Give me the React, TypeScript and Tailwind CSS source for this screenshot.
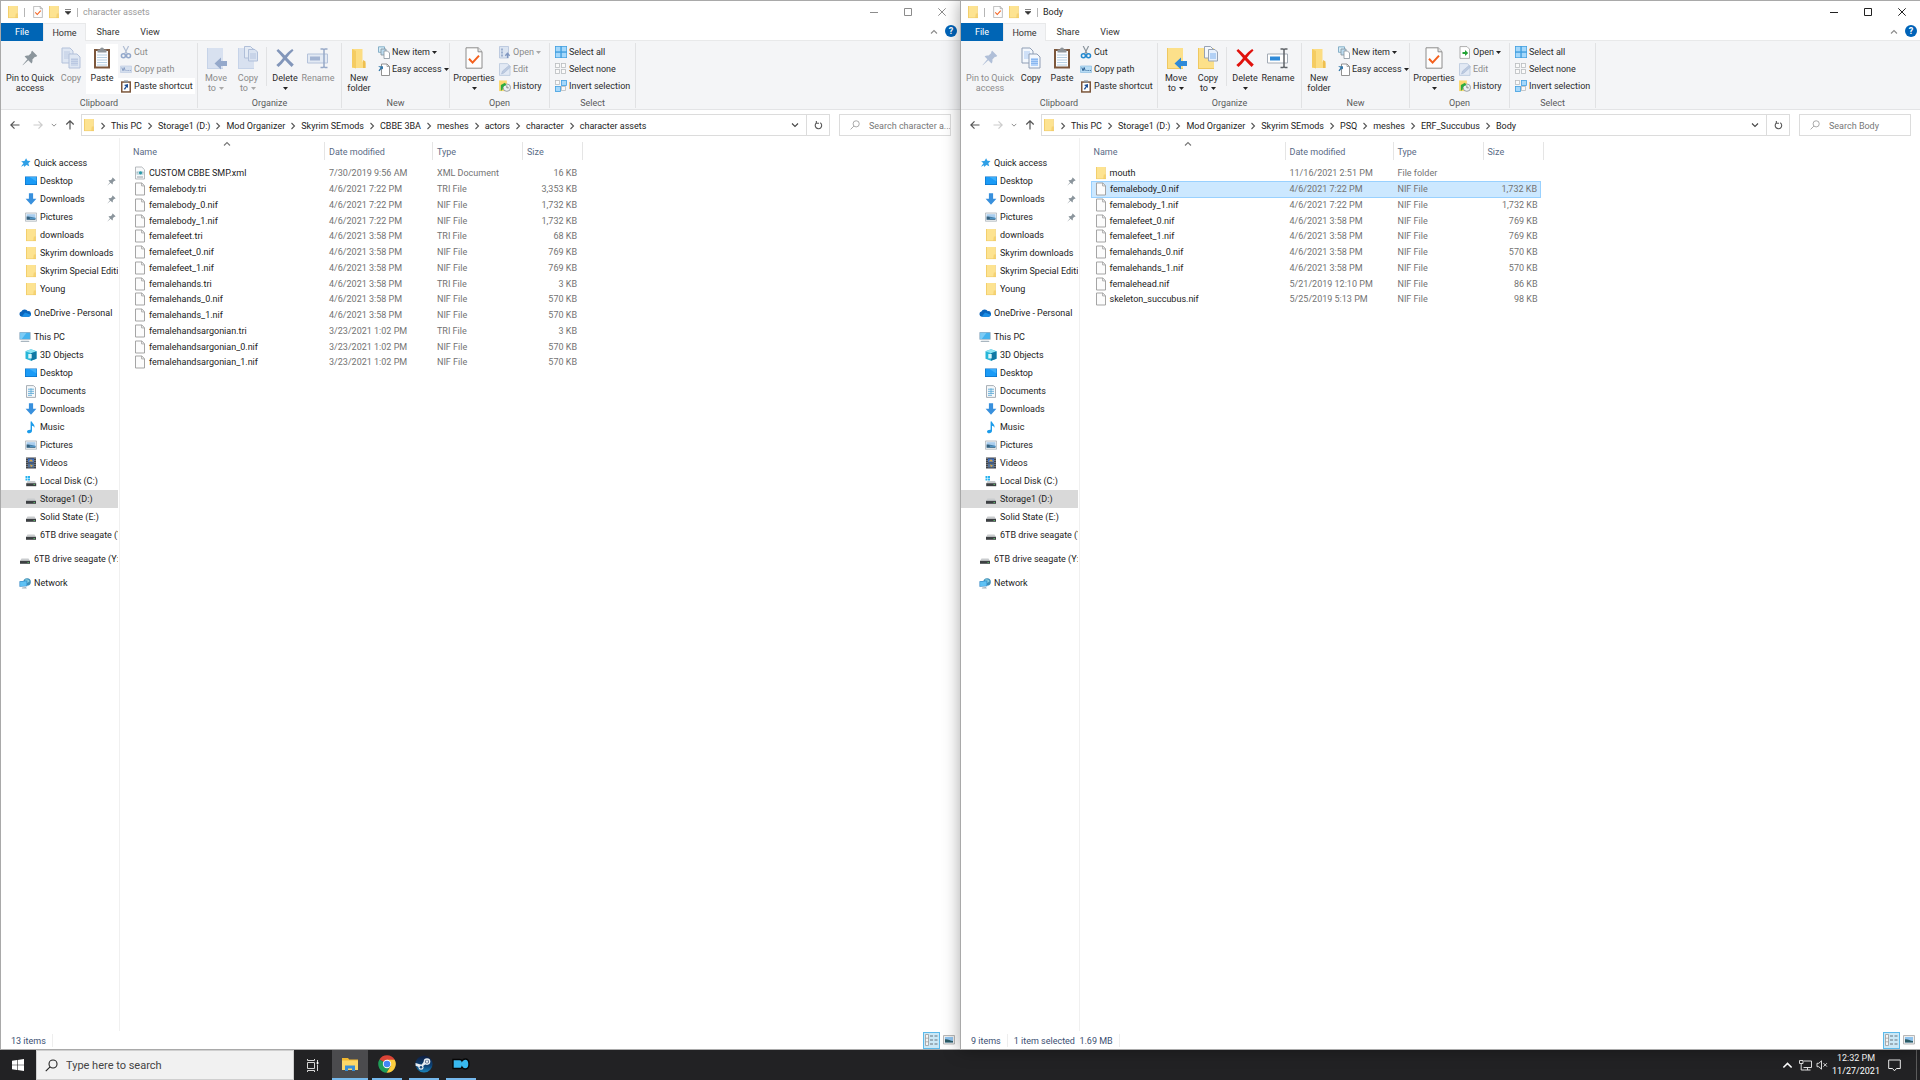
import type { ReactNode } from "react";
import clsx from "clsx";

type FileRow = { name: string; date: string; type: string; size: string; icon?: "folder" | "xml"; selected?: boolean };

type WindowData = {
  id: string;
  title: string;
  path: string[];
  files: FileRow[];
  status: string[];
  active: boolean;
};

const LEFT_WINDOW: WindowData = {
  id: "left",
  title: "character assets",
  active: false,
  path: ["This PC", "Storage1 (D:)", "Mod Organizer", "Skyrim SEmods", "CBBE 3BA", "meshes", "actors", "character", "character assets"],
  status: ["13 items"],
  files: [
    { name: "CUSTOM CBBE SMP.xml", date: "7/30/2019 9:56 AM", type: "XML Document", size: "16 KB", icon: "xml" },
    { name: "femalebody.tri", date: "4/6/2021 7:22 PM", type: "TRI File", size: "3,353 KB" },
    { name: "femalebody_0.nif", date: "4/6/2021 7:22 PM", type: "NIF File", size: "1,732 KB" },
    { name: "femalebody_1.nif", date: "4/6/2021 7:22 PM", type: "NIF File", size: "1,732 KB" },
    { name: "femalefeet.tri", date: "4/6/2021 3:58 PM", type: "TRI File", size: "68 KB" },
    { name: "femalefeet_0.nif", date: "4/6/2021 3:58 PM", type: "NIF File", size: "769 KB" },
    { name: "femalefeet_1.nif", date: "4/6/2021 3:58 PM", type: "NIF File", size: "769 KB" },
    { name: "femalehands.tri", date: "4/6/2021 3:58 PM", type: "TRI File", size: "3 KB" },
    { name: "femalehands_0.nif", date: "4/6/2021 3:58 PM", type: "NIF File", size: "570 KB" },
    { name: "femalehands_1.nif", date: "4/6/2021 3:58 PM", type: "NIF File", size: "570 KB" },
    { name: "femalehandsargonian.tri", date: "3/23/2021 1:02 PM", type: "TRI File", size: "3 KB" },
    { name: "femalehandsargonian_0.nif", date: "3/23/2021 1:02 PM", type: "NIF File", size: "570 KB" },
    { name: "femalehandsargonian_1.nif", date: "3/23/2021 1:02 PM", type: "NIF File", size: "570 KB" },
  ],
};

const RIGHT_WINDOW: WindowData = {
  id: "right",
  title: "Body",
  active: true,
  path: ["This PC", "Storage1 (D:)", "Mod Organizer", "Skyrim SEmods", "PSQ", "meshes", "ERF_Succubus", "Body"],
  status: ["9 items", "1 item selected  1.69 MB"],
  files: [
    { name: "mouth", date: "11/16/2021 2:51 PM", type: "File folder", size: "", icon: "folder" },
    { name: "femalebody_0.nif", date: "4/6/2021 7:22 PM", type: "NIF File", size: "1,732 KB", selected: true },
    { name: "femalebody_1.nif", date: "4/6/2021 7:22 PM", type: "NIF File", size: "1,732 KB" },
    { name: "femalefeet_0.nif", date: "4/6/2021 3:58 PM", type: "NIF File", size: "769 KB" },
    { name: "femalefeet_1.nif", date: "4/6/2021 3:58 PM", type: "NIF File", size: "769 KB" },
    { name: "femalehands_0.nif", date: "4/6/2021 3:58 PM", type: "NIF File", size: "570 KB" },
    { name: "femalehands_1.nif", date: "4/6/2021 3:58 PM", type: "NIF File", size: "570 KB" },
    { name: "femalehead.nif", date: "5/21/2019 12:10 PM", type: "NIF File", size: "86 KB" },
    { name: "skeleton_succubus.nif", date: "5/25/2019 5:13 PM", type: "NIF File", size: "98 KB" },
  ],
};

/* ---------- small icons ---------- */

function Folder({ className = "w-3 h-[14px]" }: { className?: string }) {
  return (
    <svg viewBox="0 0 12 14" className={clsx("shrink-0", className)}>
      <path d="M1 1h9.5v12H1z" fill="#fde391" />
      <path d="M1 1h1v12H1z" fill="#f3cf6c" />
      <path d="M8.8 8.5H11V13H8.2z" fill="#f5d273" />
      <path d="M10 1h.6v8H10z" fill="#f0cf75" />
      <path d="M1 12.5h10v.6H1z" fill="#eecb68" />
    </svg>
  );
}

function Page() {
  return (
    <svg viewBox="0 0 12 14" className="w-3 h-[14px] shrink-0">
      <path d="M1.5 1h6.3l2.7 2.7V13h-9z" fill="#fcfcfc" stroke="#9b9b9b" strokeWidth=".9" />
      <path d="M7.6 1v2.9h2.9" fill="none" stroke="#9b9b9b" strokeWidth=".8" />
    </svg>
  );
}

function XmlPage() {
  return (
    <svg viewBox="0 0 12 14" className="w-3 h-[14px] shrink-0">
      <path d="M1.5 1h6.3l2.7 2.7V13h-9z" fill="#f8f9fa" stroke="#a5a9ad" strokeWidth=".8" />
      <path d="M2.5 5h7v4h-7z" fill="#c9dfe6" />
      <circle cx="6.500" cy="6.800" r="1.600" fill="#2a9aa8" />
      <path d="M3.200 6.300v1M9 6.300v1M3 11h6" stroke="#7c8b93" strokeWidth=".8" />
    </svg>
  );
}

function CheckDoc({ className = "w-3 h-[14px]" }: { className?: string }) {
  return (
    <svg viewBox="0 0 18 22" className={className}>
      <path d="M1 .8h12.2L17 4.6v16.6H1z" fill="#fdfdfd" stroke="#8c8c8c" />
      <path d="M13 .8v4h4" fill="#e8e8e8" stroke="#8c8c8c" />
      <path d="M4 11.8l3.6 3.8L14 8.6" fill="none" stroke="#f4601d" strokeWidth="2" />
    </svg>
  );
}

function Pin({ className, color }: { className: string; color: string }) {
  return (
    <svg viewBox="0 0 16 16" className={className}>
      <path d="M10.2.8l5 5-1.2 1.1-1-.2-2.6 2.7c.3 1.6 0 3-.9 4L6.3 10.3.8 15.2l-.2-.3 4.8-5.6L2.6 6.4c1-.9 2.500-1.200 4-.8l2.700-2.700-.2-1z" fill={color} />
    </svg>
  );
}

function Caret({ className = "text-[#222]" }: { className?: string }) {
  return (
    <svg viewBox="0 0 5 3" className={clsx("w-[5px] h-[3px] inline-block shrink-0", className)}>
      <path d="M0 0h5L2.500 3z" fill="currentColor" />
    </svg>
  );
}

function Chevron({ dir, className }: { dir: "right" | "down" | "up"; className: string }) {
  const d = { right: "M2.500 1l3 3-3 3", down: "M1 2.500l3 3 3-3", up: "M1 5.500l3-3 3 3" }[dir];
  return (
    <svg viewBox="0 0 8 8" className={clsx("shrink-0", className)}>
      <path d={d} fill="none" stroke="currentColor" strokeWidth="1.1" />
    </svg>
  );
}

function Arrow({ rotate, className }: { rotate?: boolean; className: string }) {
  return (
    <svg viewBox="0 0 10 10" className={clsx("w-[10px] h-[10px] shrink-0", rotate && "rotate-180", className)}>
      <path d="M9.500 5H1M4.500 1.300L.8 5l3.700 3.700" fill="none" stroke="currentColor" strokeWidth="1.2" />
    </svg>
  );
}

function Magnifier({ className }: { className: string }) {
  return (
    <svg viewBox="0 0 12 12" className={clsx("shrink-0", className)}>
      <circle cx="7.400" cy="4.600" r="3.700" fill="none" stroke="currentColor" />
      <path d="M4.700 7.300L.7 11.300" stroke="currentColor" />
    </svg>
  );
}

/* ---------- sidebar icons ---------- */

const SIDE_ICONS: Record<string, ReactNode> = {
  star: (
    <svg viewBox="0 0 14 14" className="w-3 h-3">
      <path d="M8.300 1.500l1.500 3 3.600.2-2.500 2.500 1.100 3.500-3.300-1.300-2.900 2.400.1-2.200-3.600 1.700 2.900-4L2.500 4.900l3.900-.2z" fill="#2e9fe6" />
    </svg>
  ),
  folder: <Folder />,
  desktop: (
    <svg viewBox="0 0 12 12" className="w-3 h-3">
      <path d="M0 1.500h12v8.500H0z" fill="#0a6fc4" />
      <path d="M.6 2h10.800v7.300H.6z" fill="#1b9bf6" />
      <path d="M4.500 2h6.900v4.500z" fill="#3aaefb" />
    </svg>
  ),
  down: (
    <svg viewBox="0 0 12 12" className="w-3 h-3">
      <path d="M3.900.3h4.200v5.500h3.300L6 11.700.6 5.800h3.300z" fill="#3890dd" />
    </svg>
  ),
  pictures: (
    <svg viewBox="0 0 12 12" className="w-3 h-3">
      <path d="M.4 2h11.200v8.200H.4z" fill="#f4f6f8" stroke="#a9b1b8" strokeWidth=".8" />
      <path d="M1.600 3.200h8.800v5.600H1.600z" fill="#a8cdee" />
      <path d="M1.600 5.600c3-.6 5 .8 8.800 1.400v1.800H1.600z" fill="#35607c" />
      <path d="M4.500 6.600l6 .2v1H5z" fill="#5aa4dc" />
    </svg>
  ),
  cloud: (
    <svg viewBox="0 0 13 12" className="w-[13px] h-3">
      <path d="M3 10a2.800 2.800 0 0 1-.4-5.500A4 4 0 0 1 9.600 4a3 3 0 0 1 .8 6z" fill="#0a64bb" />
      <path d="M3 10l3.500-4.500L12.800 8c0 1.200-1 2-2.200 2z" fill="#1a8ee6" />
    </svg>
  ),
  pc: (
    <svg viewBox="0 0 13 12" className="w-[13px] h-3">
      <path d="M.5.800h12v8H.5z" fill="#7e9fb8" />
      <path d="M1.200 1.500h10.600v6.600H1.200z" fill="#45b3ee" />
      <path d="M1.200 1.500h7L3 8.100H1.200z" fill="#7bcbf6" />
      <path d="M2.500 10h8l1 1.300h-10z" fill="#a9b6c0" />
    </svg>
  ),
  cube: (
    <svg viewBox="0 0 12 12" className="w-3 h-3">
      <path d="M.5 2.200L6 .3l5.500 1.900v7.600L6 11.700.5 9.800z" fill="#27b6d8" />
      <path d="M.5 2.200L6 .3l5.500 1.900L6 4.200z" fill="#8de3f2" />
      <path d="M6 4.200l5.500-2v7.600L6 11.700z" fill="#1077a3" />
      <path d="M3.300 5h3.400v4.400H3.300z" fill="#d9f6fb" />
    </svg>
  ),
  doc: (
    <svg viewBox="0 0 12 13" className="w-3 h-[13px]">
      <path d="M1.500.6h7l2 2v9.800h-9z" fill="#f6f8fa" stroke="#939ca4" strokeWidth=".8" />
      <path d="M3 4.200h6M3 6.300h6M3 8.400h6M3 10.300h4M6 3.300v5.800" stroke="#5ba9d6" strokeWidth=".9" />
    </svg>
  ),
  music: (
    <svg viewBox="0 0 12 13" className="w-3 h-[13px]">
      <path d="M5.600.5h1.300c.3 2 3.100 2.600 2.600 6.300-.6-1.300-1.300-1.800-2.500-2v5c0 1.500-1.200 2.500-2.700 2.500S2 11.500 2 10.500s1.200-1.900 3.600-1.800z" fill="#1b9bea" />
    </svg>
  ),
  video: (
    <svg viewBox="0 0 12 12" className="w-3 h-3">
      <path d="M1 .5h10v11H1z" fill="#404348" />
      <path d="M3 1.500h6v4H3z" fill="#3d6ec1" />
      <path d="M3 6.500h6v4H3z" fill="#54749c" />
      <path d="M3.500 4.500L6 2.300l2.500 2.200zM5 7.500l3 1-2 1.700z" fill="#d6a646" />
      <path d="M2 1v10M10 1v10" stroke="#c7c9cc" strokeWidth=".8" strokeDasharray="1 1" />
    </svg>
  ),
  osdisk: (
    <svg viewBox="0 0 12 12" className="w-3 h-3">
      <path d="M.5 1h2v2h-2zM3 1h2v2H3zM.5 3.500h2v2h-2zM3 3.500h2v2H3z" fill="#27b2ef" />
      <path d="M2.500 6h7.500l1.200 2.300H1.400z" fill="#c9ccce" />
      <path d="M1.200 8.200h10v3h-10z" fill="#3d4043" />
      <path d="M8.500 9.300h1.500v.8H8.500z" fill="#5fd36d" />
    </svg>
  ),
  disk: (
    <svg viewBox="0 0 12 12" className="w-3 h-3">
      <path d="M2.500 5.500h7l1.300 2.300H1.200z" fill="#c9ccce" />
      <path d="M1 7.800h10v3H1z" fill="#3d4043" />
      <path d="M8.500 8.900h1.500v.8H8.500z" fill="#5fd36d" />
    </svg>
  ),
  network: (
    <svg viewBox="0 0 13 13" className="w-[13px] h-[13px]">
      <circle cx="8.800" cy="4.800" r="4" fill="#3f8fb8" />
      <path d="M6 2.500c2-1.500 5-.5 5.500 1.500L9 6z" fill="#86cfe0" />
      <path d="M.5 4l8.500-.8v6.400L.5 10z" fill="#2f86c6" />
      <path d="M1.200 4.700l7-.7v5l-7 .4z" fill="#5fc2f4" />
      <path d="M3.500 10.800l4-.4 1 1.400H3z" fill="#9fb1bd" />
    </svg>
  ),
};

const SIDEBAR: { icon: string; label: string; pinned?: boolean; selected?: boolean }[][] = [
  [
    { icon: "star", label: "Quick access" },
    { icon: "desktop", label: "Desktop", pinned: true },
    { icon: "down", label: "Downloads", pinned: true },
    { icon: "pictures", label: "Pictures", pinned: true },
    { icon: "folder", label: "downloads" },
    { icon: "folder", label: "Skyrim downloads" },
    { icon: "folder", label: "Skyrim Special Editi" },
    { icon: "folder", label: "Young" },
  ],
  [{ icon: "cloud", label: "OneDrive - Personal" }],
  [
    { icon: "pc", label: "This PC" },
    { icon: "cube", label: "3D Objects" },
    { icon: "desktop", label: "Desktop" },
    { icon: "doc", label: "Documents" },
    { icon: "down", label: "Downloads" },
    { icon: "music", label: "Music" },
    { icon: "pictures", label: "Pictures" },
    { icon: "video", label: "Videos" },
    { icon: "osdisk", label: "Local Disk (C:)" },
    { icon: "disk", label: "Storage1 (D:)", selected: true },
    { icon: "disk", label: "Solid State (E:)" },
    { icon: "disk", label: "6TB drive seagate (Y:)" },
  ],
  [{ icon: "disk", label: "6TB drive seagate (Y:)" }],
  [{ icon: "network", label: "Network" }],
];

/* ---------- ribbon icons ---------- */

function CopyIcon({ off }: { off?: boolean }) {
  const line = off ? "#b3c1da" : "#8f9eb5";
  const fill = off ? "#dfe7f3" : "#f4f8fd";
  return (
    <svg viewBox="0 0 20 22" className="w-5 h-[22px]">
      <path d="M1 1h8l3 3v12H1z" fill={fill} stroke={line} />
      <path d="M3 5h6M3 7h7M3 9h7M3 11h7" stroke={off ? "#bccae2" : "#a9c8f2"} />
      <path d="M8 7h8l3 3v11H8z" fill={fill} stroke={line} />
      <path d="M10 11h7v8h-7z" fill={off ? "#cbd7ea" : "#b4d3fa"} />
      <path d="M10 12.500h7M10 14.500h7M10 16.500h7" stroke={off ? "#b5c4df" : "#7db0ee"} strokeWidth=".8" />
    </svg>
  );
}

function PasteIcon() {
  return (
    <svg viewBox="0 0 18 22" className="w-[18px] h-[22px]">
      <path d="M1 2h16v19.500H1z" fill="#7c573c" />
      <path d="M3 4h12v15.500H3z" fill="#fbfdff" />
      <path d="M4 8h10M4 10.500h10M4 13h10M4 15.500h10M4 18h10" stroke="#b7cfe2" />
      <path d="M4.500 2.500h2.500a2 2 0 0 1 4 0h2.500V5.500h-9z" fill="#8e9499" />
    </svg>
  );
}

function MoveToIcon({ off }: { off?: boolean }) {
  return (
    <svg viewBox="0 0 22 24" className="w-[22px] h-6">
      <path d="M2 2h16v21H2z" fill={off ? "#d8e1f0" : "#fce08a"} />
      <path d="M2 2h1v21H2zM2 22h16v1H2z" fill={off ? "#c6d3e8" : "#efc861"} />
      <path d="M9.500 17.500l6.500-6v3.500h6v5h-6v3.500z" fill={off ? "#95a9cb" : "#2f8ad8"} />
    </svg>
  );
}

function CopyToIcon({ off }: { off?: boolean }) {
  const line = off ? "#b0bfd9" : "#97a2b3";
  return (
    <svg viewBox="0 0 22 24" className="w-[22px] h-6">
      <path d="M1 2h16v21H1z" fill={off ? "#d8e1f0" : "#fce08a"} />
      <path d="M1 2h1v21H1zM1 22h16v1H1z" fill={off ? "#c6d3e8" : "#efc861"} />
      <path d="M7.500.500h6l2.500 2.500v9H7.500z" fill={off ? "#e4ebf5" : "#f4f8fd"} stroke={line} />
      <path d="M11.500 3.500h6.500l2.500 2.500v9h-9z" fill={off ? "#dae3f1" : "#e8f1fd"} stroke={line} />
      <path d="M13 8h6M13 10h6M13 12h6" stroke={off ? "#b5c4df" : "#7db0ee"} />
    </svg>
  );
}

function DeleteIcon({ off }: { off?: boolean }) {
  return (
    <svg viewBox="0 0 20 20" className="w-5 h-5">
      <path d="M1.500 2.800L3.200 1c2.500 2 4.700 4.200 6.800 6.500C12 5 14.500 2.800 17.200 1l1.300 1.500c-2.600 2.200-4.800 4.600-6.600 7.200 2.300 2.400 4.600 4.700 6.900 6.700L16.600 19c-2.400-2-4.600-4.500-6.700-6.900-1.900 2.500-4 4.900-6.400 7L1.300 17c2.600-2.100 4.800-4.500 6.700-7.100C6 7.400 3.800 5 1.500 2.800z" fill={off ? "#8296ba" : "#e0110c"} />
    </svg>
  );
}

function RenameIcon({ off }: { off?: boolean }) {
  return (
    <svg viewBox="0 0 22 22" className="w-[22px] h-[22px]">
      <path d="M.5 7h20v9H.500z" fill={off ? "#e3eaf4" : "#fff"} stroke={off ? "#b4c2da" : "#a3abb5"} />
      <path d="M3 9.500h10v4H3z" fill={off ? "#a4b5d3" : "#2f8ad8"} />
      <path d="M13.500 2h2.500l1 .8 1-.8h2.500M17 2.500v17M13.500 20.500h2.500l1-.8 1 .8h2.500" fill="none" stroke={off ? "#97a9c8" : "#5d6267"} strokeWidth="1.500" />
    </svg>
  );
}

function NewFolderIcon() {
  return (
    <svg viewBox="0 0 14 22" className="w-[14px] h-[22px]">
      <path d="M0 2h10.500v12.500L13.500 16v5H0z" fill="#fcdd83" />
      <path d="M0 2l4 2v17.500L0 20z" fill="#f5cc62" />
      <path d="M11 13l2.500 1.500V21H11z" fill="#eebf50" />
    </svg>
  );
}

function Scissors({ off }: { off?: boolean }) {
  const handle = off ? "#93a8cb" : "#2489cf";
  return (
    <svg viewBox="0 0 12 13" className="w-3 h-[13px]">
      <path d="M3.200 0l4 7.800M8.600 0L4.700 7.800" stroke={off ? "#b0bdd3" : "#8a949d"} strokeWidth="1.200" />
      <circle cx="3.400" cy="9.700" r="2" fill="none" stroke={handle} strokeWidth="1.500" />
      <circle cx="8.500" cy="9.700" r="2" fill="none" stroke={handle} strokeWidth="1.500" />
    </svg>
  );
}

function PathIcon({ off }: { off?: boolean }) {
  return (
    <svg viewBox="0 0 12 12" className="w-3 h-3">
      <path d="M.5 3h11v6.500H.500z" fill={off ? "#d5dfee" : "#b9ddf5"} stroke={off ? "#c0cde2" : "#8dbfe2"} strokeWidth=".7" />
      <path d="M1.800 4.500L3 7.800l1.200-3.300 1 3.300M6.500 7.500h1M8.300 7.500h1M10 7.500h.8" fill="none" stroke={off ? "#8299c0" : "#24598c"} strokeWidth=".9" />
    </svg>
  );
}

function PasteShortcutIcon() {
  return (
    <svg viewBox="0 0 12 13" className="w-3 h-[13px]">
      <path d="M1 1.300h10v11.400H1z" fill="#7c573c" />
      <path d="M2.500 2.800h7v8.400h-7z" fill="#fff" />
      <path d="M4 .4h4v2H4z" fill="#8e9499" />
      <path d="M4 5l4-1v4L6.800 7 5 9.800 3.800 9l2-2.800z" fill="#1c4f96" />
    </svg>
  );
}

function NewItemIcon() {
  return (
    <svg viewBox="0 0 12 13" className="w-3 h-[13px]">
      <path d="M.500.800h6v5.500h-6z" fill="#d6edf9" stroke="#6f9fbc" strokeWidth=".8" />
      <path d="M3 3h5v6H3z" fill="#bcdcf0" stroke="#86929c" strokeWidth=".8" />
      <path d="M6 5h3.500l2 2v5.500H6z" fill="#fff" stroke="#86929c" strokeWidth=".8" />
    </svg>
  );
}

function EasyAccessIcon() {
  return (
    <svg viewBox="0 0 12 13" className="w-3 h-[13px]">
      <path d="M3.500 1h5.500l2.500 2.500v9h-8z" fill="#fff" stroke="#868686" strokeWidth=".9" />
      <path d="M9 1v2.500h2.500" fill="none" stroke="#868686" strokeWidth=".7" />
      <path d="M0 3.300h5v3.200L3.800 5.400 1.500 8.300.500 7.400l2-2.600z" fill="#3277a8" />
    </svg>
  );
}

function OpenIcon({ off }: { off?: boolean }) {
  if (off) {
    return (
      <svg viewBox="0 0 12 13" className="w-3 h-[13px]">
        <path d="M.5.500h9v11.500h-9z" fill="#dbe4f1" stroke="#b4c2da" strokeWidth=".8" />
        <path d="M2 2.500h2v2H2zM2 5.500h2v2H2zM2 8.500h2v2H2z" fill="#9db0cf" />
        <path d="M8.500 12V8M6.300 9.700l2.200-2.400 2.200 2.400" stroke="#7f96c0" strokeWidth="1.300" fill="none" />
      </svg>
    );
  }
  return (
    <svg viewBox="0 0 12 13" className="w-3 h-[13px]">
      <path d="M1 .600h7l2.500 2.500v9.300H1z" fill="#fff" stroke="#9b9b9b" strokeWidth=".8" />
      <path d="M3.500 6h2.500V4l3.200 3L6 10V8H3.500z" fill="#23a336" />
    </svg>
  );
}

function EditIcon() {
  return (
    <svg viewBox="0 0 12 13" className="w-3 h-[13px]">
      <path d="M.5.600h8l2.500 2.500v9.300H.500z" fill="#e2e9f4" stroke="#b8c6dc" strokeWidth=".8" />
      <path d="M2.500 11l1-3L10 2.500l1.500 1.500L5 10z" fill="#bccae0" stroke="#a3b4d1" strokeWidth=".5" />
    </svg>
  );
}

function HistoryIcon() {
  return (
    <svg viewBox="0 0 13 13" className="w-3 h-3">
      <path d="M0 .5h8.500v11.500H0z" fill="#fbd96f" />
      <circle cx="8.500" cy="8.300" r="4" fill="#eef1f3" stroke="#8b9298" strokeWidth=".9" />
      <path d="M8.500 6v2.500h2" fill="none" stroke="#666" strokeWidth=".8" />
      <path d="M6.500 3L2 5.500V12l2-1.800c0-2.500 1-4 4-4.400z" fill="#2bab3f" />
    </svg>
  );
}

function SelectIcon({ kind }: { kind: "all" | "none" | "invert" }) {
  const cells = [[0.5, 0.5], [6.5, 0.5], [0.5, 6.5], [6.5, 6.5]];
  return (
    <svg viewBox="0 0 12 12" className="w-3 h-3">
      {cells.map(([x, y], i) => {
        const on = kind === "all" || (kind === "invert" && (i === 1 || i === 2));
        const size = kind === "all" ? 5.2 : on ? 5 : 4;
        return (
          <rect key={i} x={x} y={y} width={size} height={size}
            fill={on ? "#a5d8fb" : "#fafafa"} stroke={on ? "#3f9fe0" : "#b9bcbf"} strokeWidth=".8" />
        );
      })}
    </svg>
  );
}

/* ---------- ribbon ---------- */

function BigButton({ icon, lines, width, off, caret, hot }: {
  icon: ReactNode; lines: string[]; width: string; off?: boolean; caret?: boolean; hot?: boolean;
}) {
  return (
    <button
      disabled={off}
      className={clsx("h-[50px] mt-px flex flex-col items-center shrink-0 pt-0.5 leading-[10px]", width,
        hot && "bg-white", off ? "text-[#8b8b8b]" : "text-[#2b2b2b]")}
    >
      <span className="h-6 mb-[3px] flex items-center">{icon}</span>
      {lines.map((line, i) => (
        <span key={line} className="whitespace-nowrap flex items-center gap-[3px]">
          {line}
          {caret && lines.length > 1 && i === lines.length - 1 && <Caret className={off ? "text-[#aaa]" : "text-[#222]"} />}
        </span>
      ))}
      {caret && lines.length === 1 && <span className="h-[10px] flex items-center"><Caret /></span>}
    </button>
  );
}

function SmallButton({ icon, label, off, caret, hot }: {
  icon: ReactNode; label: string; off?: boolean; caret?: boolean; hot?: boolean;
}) {
  return (
    <button
      disabled={off}
      className={clsx("h-4 flex items-center gap-0.5 px-0.5 whitespace-nowrap", hot && "bg-white",
        off ? "text-[#8b8b8b]" : "text-[#2b2b2b]")}
    >
      <span className="w-3 shrink-0">{icon}</span>
      {label}
      {caret && <Caret className={off ? "text-[#aaa]" : "text-[#222]"} />}
    </button>
  );
}

function Group({ label, width, inset, children }: { label: string; width: string; inset?: string; children: ReactNode }) {
  return (
    <section className={clsx("mt-0.5 mb-px flex flex-col border-r border-[#e1e2e4] shrink-0", width)}>
      <div className={clsx("flex grow", inset)}>{children}</div>
      <h2 className="h-[10px] leading-[10px] text-center text-[#5a5a5a]">{label}</h2>
    </section>
  );
}

function Ribbon({ active }: { active: boolean }) {
  const off = !active;
  return (
    <div className="h-[69px] bg-[#f4f5f7] border-b border-[#e3e4e6] flex overflow-hidden">
      <Group label="Clipboard" width="w-[197px]" inset="pl-[3px]">
        <BigButton width="w-[52px]" off={active} lines={["Pin to Quick", "access"]}
          icon={<Pin className="w-4 h-4" color={active ? "#b0bfd8" : "#8b959c"} />} />
        <BigButton width="w-[30px]" off={off} lines={["Copy"]} icon={<CopyIcon off={off} />} />
        <BigButton width="w-[32px]" lines={["Paste"]} icon={<PasteIcon />} hot={off} />
        <div className="flex flex-col gap-px mt-px">
          <SmallButton label="Cut" off={off} icon={<Scissors off={off} />} />
          <SmallButton label="Copy path" off={off} icon={<PathIcon off={off} />} />
          <SmallButton label="Paste shortcut" icon={<PasteShortcutIcon />} hot={off} />
        </div>
      </Group>
      <Group label="Organize" width="w-[144px]" inset="pl-0.5">
        <BigButton width="w-[32px]" off={off} caret lines={["Move", "to"]} icon={<MoveToIcon off={off} />} />
        <BigButton width="w-[32px]" off={off} caret lines={["Copy", "to"]} icon={<CopyToIcon off={off} />} />
        <div className="w-px mx-0.5 mt-1 mb-3 bg-[#e1e2e4]" />
        <BigButton width="w-[32px]" caret lines={["Delete"]} icon={<DeleteIcon off={off} />} />
        <BigButton width="w-[34px]" off={off} lines={["Rename"]} icon={<RenameIcon off={off} />} />
      </Group>
      <Group label="New" width="w-[108px]">
        <BigButton width="w-[34px]" lines={["New", "folder"]} icon={<NewFolderIcon />} />
        <div className="flex flex-col gap-px mt-px">
          <SmallButton label="New item" caret icon={<NewItemIcon />} />
          <SmallButton label="Easy access" caret icon={<EasyAccessIcon />} />
        </div>
      </Group>
      <Group label="Open" width="w-[100px]" inset="pl-px">
        <BigButton width="w-[46px]" caret lines={["Properties"]} icon={<CheckDoc className="w-[18px] h-[22px]" />} />
        <div className="flex flex-col gap-px mt-px items-start">
          <SmallButton label="Open" off={off} caret icon={<OpenIcon off={off} />} />
          <SmallButton label="Edit" off icon={<EditIcon />} />
          <SmallButton label="History" icon={<HistoryIcon />} />
        </div>
      </Group>
      <Group label="Select" width="w-[86px]" inset="pl-[3px]">
        <div className="flex flex-col gap-px mt-px">
          <SmallButton label="Select all" icon={<SelectIcon kind="all" />} />
          <SmallButton label="Select none" icon={<SelectIcon kind="none" />} />
          <SmallButton label="Invert selection" icon={<SelectIcon kind="invert" />} />
        </div>
      </Group>
    </div>
  );
}

/* ---------- window parts ---------- */

function TitleBar({ title, active }: { title: string; active: boolean }) {
  return (
    <header className="h-[22px] flex items-center pl-1.5">
      <Folder />
      <i className="w-px h-[9px] bg-[#b5b5b5] ml-[5px] mr-2" />
      <CheckDoc className="w-[10px] h-3" />
      <Folder className="w-3 h-[14px] ml-[5px]" />
      <svg viewBox="0 0 6 6" className="w-[6px] h-[6px] ml-[5px]">
        <path d="M0 .5h6M0 2.500h6L3 5.500z" fill="#333" stroke="#333" strokeWidth=".6" />
      </svg>
      <i className="w-px h-[9px] bg-[#b5b5b5] ml-1.5 mr-[5px]" />
      <h1 className={active ? "text-[#222]" : "text-[#999]"}>{title}</h1>
      <div className={clsx("ml-auto mr-px flex self-stretch", active ? "text-[#222]" : "text-[#8c8c8c]")}>
        <button aria-label="Minimize" className="w-[34px] flex items-center justify-center">
          <svg viewBox="0 0 8 8" className="w-2 h-2"><path d="M0 4.500h8" stroke="currentColor" /></svg>
        </button>
        <button aria-label="Maximize" className="w-[34px] flex items-center justify-center">
          <svg viewBox="0 0 8 8" className="w-2 h-2"><path d="M.5.500h7v7h-7z" fill="none" stroke="currentColor" /></svg>
        </button>
        <button aria-label="Close" className="w-[34px] flex items-center justify-center">
          <svg viewBox="0 0 8 8" className="w-2 h-2"><path d="M.3.300l7.400 7.400M7.700.300L.3 7.700" stroke="currentColor" /></svg>
        </button>
      </div>
    </header>
  );
}

function Tabs() {
  return (
    <nav className="h-[18px] flex border-b border-[#e8e9ea] text-[#333]">
      <button className="w-[42px] h-[18px] bg-[#0065b5] text-white">File</button>
      <button className="w-[43px] h-[18px] bg-[#f4f5f7] border border-b-0 border-[#e8e9ea]">Home</button>
      <button className="w-[44px]">Share</button>
      <button className="w-[40px]">View</button>
      <button aria-label="Minimize the Ribbon" className="ml-auto">
        <Chevron dir="up" className="w-2 h-2 text-[#8c8c8c]" />
      </button>
      <button aria-label="Help" className="w-3 h-3 mt-0.5 ml-[7px] mr-[3px] rounded-full bg-[#0063b8] text-white font-bold leading-3 text-center">?</button>
    </nav>
  );
}

function AddressBar({ id, title, path }: { id: string; title: string; path: string[] }) {
  return (
    <div className="h-7 flex items-center pt-0.5">
      <button aria-label="Back" className="ml-[9px]"><Arrow className="text-[#555]" /></button>
      <button aria-label="Forward" className="ml-[13px]"><Arrow rotate className="text-[#ccc]" /></button>
      <button aria-label="Recent locations" className="ml-2"><Chevron dir="down" className="w-1.5 h-1.5 text-[#777]" /></button>
      <button aria-label="Up" className="ml-2 mr-[6px]">
        <svg viewBox="0 0 10 10" className="w-[10px] h-[10px]">
          <path d="M5 9.500V1M1.300 4.500L5 .800l3.700 3.700" fill="none" stroke="#555" strokeWidth="1.200" />
        </svg>
      </button>
      <div className="h-[22px] grow flex items-center border border-[#dcdcdc] pl-px min-w-0">
        <Folder />
        <ol className="flex items-center text-[#222] grow pt-px">
          {path.map(part => (
            <li key={part} className="flex items-center whitespace-nowrap">
              <Chevron dir="right" className="w-2 h-2 mx-1 text-[#555]" />
              <a href="#">{part}</a>
            </li>
          ))}
        </ol>
        <button aria-label="Previous locations" className="w-[22px] flex justify-center">
          <Chevron dir="down" className="w-2 h-2 text-[#444]" />
        </button>
        <button aria-label="Refresh" className="w-[23px] h-full border-l border-[#dcdcdc] flex items-center justify-center">
          <svg viewBox="0 0 10 10" className="w-[9px] h-[9px]">
            <path d="M2.600 2.200A3.600 3.600 0 1 0 7 2M2.600 0v2.500h3" fill="none" stroke="#555" strokeWidth="1.200" />
          </svg>
        </button>
      </div>
      <div className="w-[112px] h-[22px] ml-[9px] mr-[9px] shrink-0 border border-[#dcdcdc] flex items-center pl-[10px]">
        <label htmlFor={`search-${id}`} aria-label="Search">
          <Magnifier className="w-[10px] h-[10px] text-[#999]" />
        </label>
        <input
          id={`search-${id}`}
          type="text"
          placeholder={title === "Body" ? "Search Body" : "Search character a..."}
          className="grow min-w-0 ml-[9px] pt-px outline-none placeholder:text-[#777]"
        />
      </div>
    </div>
  );
}

function Sidebar() {
  return (
    <aside className="w-[119px] shrink-0 border-r border-[#f0f0f0] pt-4 pr-px flex flex-col gap-1.5 text-[#222]">
      {SIDEBAR.map((group, g) => (
        <ul key={g}>
          {group.map((item, i) => (
            <li key={item.label}>
              <a href="#" className={clsx("h-[18px] flex items-center gap-[3px] overflow-hidden whitespace-nowrap",
                i > 0 ? "pl-6" : "pl-[18px]", item.selected && "bg-[#d9d9d9]")}>
                <span className="w-3 shrink-0 flex justify-center">{SIDE_ICONS[item.icon]}</span>
                <span>{item.label}</span>
                {item.pinned && <Pin className="w-[9px] h-[9px] ml-auto mr-0.5" color="#8b959c" />}
              </a>
            </li>
          ))}
        </ul>
      ))}
    </aside>
  );
}

function FileTable({ files }: { files: FileRow[] }) {
  const head = "p-0 pb-[5px] font-normal text-left";
  const cell = "h-[18px] pt-px flex items-center border-r border-[#e5e5e5]";
  return (
    <table className="table-fixed border-collapse w-[452px] ml-[11px] mt-1 self-start">
      <colgroup>
        <col className="w-[194px]" />
        <col className="w-[108px]" />
        <col className="w-[90px]" />
        <col className="w-[57px]" />
        <col className="w-[3px]" />
      </colgroup>
      <thead className="text-[#5a6b86]">
        <tr>
          <th className={clsx(head, "relative")}>
            <Chevron dir="up" className="absolute -top-0.5 left-[92px] w-2 h-2 text-[#777]" />
            <div className={clsx(cell, "pl-0.5")}>Name</div>
          </th>
          <th className={head}><div className={clsx(cell, "pl-1")}>Date modified</div></th>
          <th className={head}><div className={clsx(cell, "pl-1")}>Type</div></th>
          <th className={head} colSpan={2}><div className={clsx(cell, "pl-1")}>Size</div></th>
        </tr>
      </thead>
      <tbody className="text-[#737373]">
        {files.map(file => (
          <tr key={file.name} className="h-4 nth-[4n]:h-[15px] whitespace-nowrap">
            <td className={clsx("p-0 text-[#222]", file.selected && "bg-[#cce8ff] border border-r-0 border-[#99d1ff]")}>
              <div className="flex items-center gap-[3px] pl-[3px] h-[14px]">
                {file.icon === "folder" ? <Folder /> : file.icon === "xml" ? <XmlPage /> : <Page />}
                {file.name}
              </div>
            </td>
            <td className={clsx("p-0 pl-1", file.selected && "bg-[#cce8ff] border-y border-[#99d1ff]")}>{file.date}</td>
            <td className={clsx("p-0 pl-1", file.selected && "bg-[#cce8ff] border-y border-[#99d1ff]")}>{file.type}</td>
            <td className={clsx("p-0 pr-[3px] text-right", file.selected && "bg-[#cce8ff] border border-l-0 border-[#99d1ff]")}>{file.size}</td>
            <td className="p-0" />
          </tr>
        ))}
      </tbody>
    </table>
  );
}

function StatusBar({ status }: { status: string[] }) {
  return (
    <footer className="h-[18px] flex items-center pl-1 text-[#3b4f72]">
      {status.map(text => (
        <span key={text} className="px-1.5 pt-px border-r border-[#eee] whitespace-pre">{text}</span>
      ))}
      <button aria-label="Details" className="ml-auto w-[17px] h-[17px] border border-[#5bb9ea] bg-[#cbe8f6] flex items-center justify-center">
        <svg viewBox="0 0 13 12" className="w-[13px] h-3">
          <path d="M.5.500h3v11h-3z" fill="#f6f6f6" stroke="#9b9b9b" strokeWidth=".8" />
          <path d="M.5 4.200h3M.5 7.800h3" stroke="#9b9b9b" strokeWidth=".7" />
          <path d="M5 2h3M9.500 2h3M5 6h3M9.500 6h3M5 10h3M9.500 10h3" stroke="#66727c" />
        </svg>
      </button>
      <button aria-label="Large icons" className="ml-[3px] mr-[5px]">
        <svg viewBox="0 0 12 10" className="w-3 h-[10px]">
          <path d="M.5.500h11v8.500H.500z" fill="#eee" stroke="#a6a6a6" strokeWidth=".8" />
          <path d="M2 2h8v5.500H2z" fill="#8fc3ee" />
          <path d="M2 4.200c3-.400 5 1.300 8 1.800v1.500H2z" fill="#2c5c66" />
        </svg>
      </button>
    </footer>
  );
}

function ExplorerWindow({ win }: { win: WindowData }) {
  return (
    <main className={clsx("w-1/2 min-w-0 flex flex-col bg-white border border-r-0 border-[#a9a9a9]",
      win.active && "relative shadow-[0_0_16px_rgba(0,0,0,0.35)]")}>
      <TitleBar title={win.title} active={win.active} />
      <Tabs />
      <Ribbon active={win.active} />
      <AddressBar id={win.id} title={win.title} path={win.path} />
      <div className="grow flex min-h-0">
        <Sidebar />
        <FileTable files={win.files} />
      </div>
      <StatusBar status={win.status} />
    </main>
  );
}

/* ---------- taskbar ---------- */

function TaskButton({ label, current, children }: { label: string; current?: boolean; children: ReactNode }) {
  return (
    <button
      aria-label={label}
      className={clsx("h-full flex items-center justify-center border-b-2 border-[#76b9ed]",
        current ? "w-9 bg-[#4b4b4e]" : "w-[30px]")}
    >
      {children}
    </button>
  );
}

function Taskbar() {
  return (
    <div className="h-[30px] shrink-0 bg-[#222224] flex items-center text-white">
      <button aria-label="Start" className="w-9 h-full flex items-center justify-center">
        <svg viewBox="0 0 12 12" className="w-3 h-3">
          <path d="M0 1.700l5-.700v4.700H0zM5.600.900L12 0v5.700H5.600zM0 6.300h5V11l-5-.700zM5.600 6.300H12V12l-6.400-.900z" fill="#fff" />
        </svg>
      </button>
      <div className="w-[258px] h-full bg-[#f1f1f1] border border-[#cfcfcf] flex items-center pl-2 text-[#333]">
        <label htmlFor="taskbar-search" aria-label="Search Windows">
          <Magnifier className="w-[13px] h-[13px] text-[#222]" />
        </label>
        <input id="taskbar-search" placeholder="Type here to search" className="grow ml-2 pt-px text-[11px] outline-none placeholder:text-[#444]" />
      </div>
      <button aria-label="Task View" className="w-9 h-full mr-0.5 flex items-center justify-center">
        <svg viewBox="0 0 13 13" className="w-[13px] h-[13px]">
          <path d="M1.500 3.500h7v6h-7z" fill="none" stroke="#d6d6d6" />
          <path d="M1.500 0v1.500h7V0M1.500 13v-1.500h7V13M11.500 1v2.500M11.500 5.500V12" fill="none" stroke="#d6d6d6" />
          <path d="M10.700 3h1.700v2h-1.700z" fill="#fff" />
        </svg>
      </button>
      <div className="flex h-full">
        <TaskButton label="File Explorer" current>
          <svg viewBox="0 0 18 16" className="w-[18px] h-4">
            <path d="M1 2h6l1.200 1.500H17V14H1z" fill="#f2b830" />
            <path d="M1 4.500h16V14H1z" fill="#fdd868" />
            <path d="M4 15V9.500h10V15h-3v-2.500H7V15z" fill="#3a8fd6" />
          </svg>
        </TaskButton>
        <div className="w-1" />
        <TaskButton label="Google Chrome">
          <svg viewBox="0 0 18 18" className="w-[18px] h-[18px]">
            <path d="M9 9L1.400 4.600A8.800 8.800 0 0 1 16.700 4.800z" fill="#db4437" />
            <path d="M9 9l-7.600-4.400A8.800 8.800 0 0 0 8.500 17.800L12.500 11z" fill="#1f9d58" />
            <path d="M9 4.800h7.700A8.800 8.800 0 0 1 8.500 17.800L12.700 11z" fill="#fdce3e" />
            <circle cx="9" cy="9" r="4.200" fill="#fff" />
            <circle cx="9" cy="9" r="3.300" fill="#4486f4" />
          </svg>
        </TaskButton>
        <div className="w-[7px]" />
        <TaskButton label="Steam">
          <svg viewBox="0 0 18 18" className="w-[18px] h-[18px]">
            <defs>
              <linearGradient id="steam" x1="0" y1="0" x2="0" y2="1">
                <stop offset="0" stopColor="#101c3d" />
                <stop offset=".6" stopColor="#0c4275" />
                <stop offset="1" stopColor="#1b87bf" />
              </linearGradient>
            </defs>
            <circle cx="9" cy="9" r="8.600" fill="url(#steam)" />
            <path d="M.6 10.800l5 2 6-4.300-1.700-3.300-3.400 4.600L.5 8z" fill="#e8edf2" />
            <circle cx="12" cy="6.600" r="3.300" fill="#e8edf2" />
            <circle cx="12" cy="6.600" r="1.900" fill="#203a63" />
            <circle cx="12" cy="6.600" r="1.300" fill="#e8edf2" />
            <circle cx="6" cy="12.300" r="2.500" fill="#e8edf2" />
            <circle cx="6" cy="12.300" r="1.300" fill="#1d4a7a" />
          </svg>
        </TaskButton>
        <div className="w-[7px]" />
        <TaskButton label="Mod Organizer">
          <svg viewBox="0 0 18 12" className="w-[18px] h-3">
            <path d="M1 1.500h6.500c1.500 0 2.300.7 2.500 1.400C11 1.500 12 1 13.200 1 15.800 1 17 3.300 17 6s-1.200 5-3.800 5c-1.200 0-2.200-.5-3.200-1.900-.2.700-1 1.400-2.500 1.400H1z" fill="#38b8ee" stroke="#050505" strokeWidth="1.400" />
          </svg>
        </TaskButton>
      </div>
      <div className="ml-auto h-full flex items-center">
        <button aria-label="Show hidden icons"><Chevron dir="up" className="w-[11px] h-[11px]" /></button>
        <svg viewBox="0 0 13 12" className="w-[13px] h-3 ml-1.5">
          <path d="M4.500 2h8v6.500h-8M8.500 8.500v2.500M5.500 11h6" fill="none" stroke="#ddd" />
          <path d="M.5 1.500h3.500v3H.500zM2.200 4.500v6.500h3.300" fill="none" stroke="#ddd" />
        </svg>
        <svg viewBox="0 0 12 12" className="w-3 h-3 ml-1">
          <path d="M1 4.300h1.800L5.500 1.800v8.400L2.800 7.700H1z" fill="none" stroke="#ddd" />
          <path d="M7.500 4.200l3.400 3.400M10.900 4.200L7.500 7.600" stroke="#ddd" />
        </svg>
        <div className="w-[56px] text-center leading-[13px]">
          <div>12:32 PM</div>
          <div>11/27/2021</div>
        </div>
        <button aria-label="Notifications" className="ml-1 mr-[15px]">
          <svg viewBox="0 0 13 13" className="w-[13px] h-[13px]">
            <path d="M.700 1h11.600v8.500H8.500L6.500 11.800l-2-2.300H.700z" fill="none" stroke="#eee" />
          </svg>
        </button>
        <i className="w-px h-full bg-[#5c5c5c] mr-[3px]" />
      </div>
    </div>
  );
}

export default function App() {
  return (
    <div className="h-screen flex flex-col overflow-hidden bg-white font-[Roboto,sans-serif] text-[9px] leading-3">
      <div className="grow flex min-h-0">
        <ExplorerWindow win={LEFT_WINDOW} />
        <ExplorerWindow win={RIGHT_WINDOW} />
      </div>
      <Taskbar />
    </div>
  );
}
